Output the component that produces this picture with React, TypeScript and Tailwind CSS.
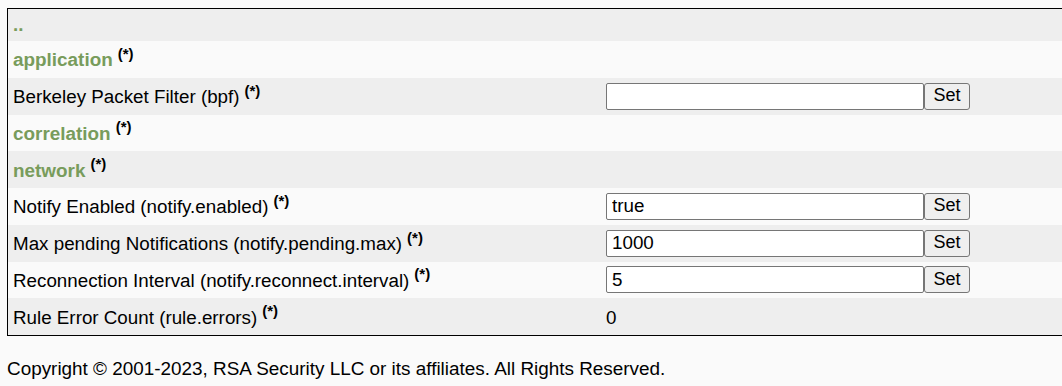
import React from 'react';

type Row = {
  label: string;
  section?: boolean;
  input?: string;
  value?: string;
};

const rows: Row[] = [
  { label: 'application', section: true },
  { label: 'Berkeley Packet Filter (bpf)', input: '' },
  { label: 'correlation', section: true },
  { label: 'network', section: true },
  { label: 'Notify Enabled (notify.enabled)', input: 'true' },
  { label: 'Max pending Notifications (notify.pending.max)', input: '1000' },
  { label: 'Reconnection Interval (notify.reconnect.interval)', input: '5' },
  { label: 'Rule Error Count (rule.errors)', value: '0' },
];

function Star() {
  return (
    <sup className="ml-[5px] text-[15px] font-bold text-black">(*)</sup>
  );
}

export default function App() {
  return (
    <div
      className="min-h-screen overflow-hidden bg-[#fafafa] text-[18.8px] text-black"
      style={{ fontFamily: '"Liberation Sans", Arial, sans-serif' }}
    >
      {/* Config table */}
      <div className="ml-[7px] mt-[8px] border-y border-l border-black">
        <div className="flex h-[32px] items-center bg-[#eeeeee] pl-[5px]">
          <span className="font-bold text-[#789c5c]">..</span>
        </div>
        {rows.map((row, i) => (
          <div
            key={row.label}
            className={`flex h-[36.75px] items-center ${
              i % 2 === 0 ? 'bg-[#fafafa]' : 'bg-[#eeeeee]'
            }`}
          >
            <div className="w-[598px] shrink-0 pl-[5px] pt-[2px] leading-[22px]">
              {row.section ? (
                <span className="text-[18.9px] font-bold text-[#789c5c]">{row.label}</span>
              ) : (
                <span>{row.label}</span>
              )}
              <Star />
            </div>
            {row.input !== undefined && (
              <div className="flex items-center">
                <input
                  type="text"
                  defaultValue={row.input}
                  className="h-[27px] w-[318px] rounded-[2px] border border-[#767676] bg-white px-[5px] text-[18.8px] outline-none"
                  style={{ fontFamily: '"Liberation Sans", Arial, sans-serif' }}
                />
                <button
                  className="flex h-[27px] w-[46px] items-center justify-center rounded-[3px] border border-[#767676] bg-[#efefef] pb-[2px] text-[18px] leading-none"
                  style={{ fontFamily: '"Liberation Sans", Arial, sans-serif' }}
                >
                  Set
                </button>
              </div>
            )}
            {row.value !== undefined && <span className="pt-[2px]">{row.value}</span>}
          </div>
        ))}
      </div>

      {/* Footer */}
      <div className="ml-[7px] mt-[22px] text-[18.9px] leading-[21px]">
        Copyright © 2001-2023, RSA Security LLC or its affiliates. All Rights Reserved.
      </div>
    </div>
  );
}
